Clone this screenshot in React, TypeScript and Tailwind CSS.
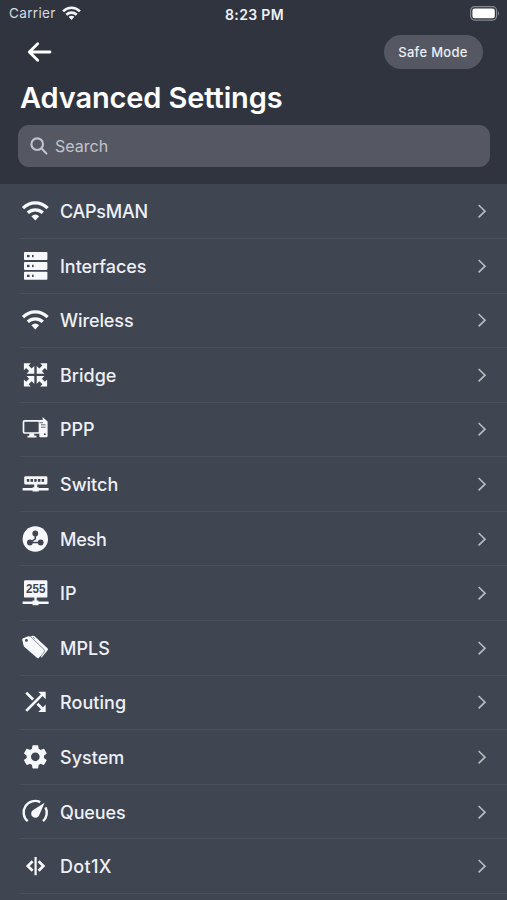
import type { ReactNode } from "react";

const BG = "#3f4551";

const WifiIcon = () => (
  <g fill="none" stroke="currentColor" strokeWidth="3.3">
    <path d="M2 11.2C9 4.2 19.6 4.2 26.6 11.2" />
    <path d="M6.8 15.8C11 11.8 17.6 11.8 21.8 15.8" />
    <path d="M10.4 19.2Q14.3 16 18.2 19.2L14.3 23.4Z" fill="currentColor" stroke="none" />
  </g>
);

const ServersIcon = () => (
  <g>
    {[0, 9.9, 19.8].map((y) => (
      <g key={y}>
        <rect x="3" y={y} width="23.4" height="8" rx="0.8" fill="currentColor" />
        <rect x="6" y={y + 2.9} width="2.6" height="2.3" fill={BG} />
        <rect x="11" y={y + 2.9} width="1.6" height="2.3" fill={BG} />
      </g>
    ))}
  </g>
);

const BridgeIcon = () => (
  <g fill="currentColor">
    {[0, 90, 180, 270].map((a) => (
      <path
        key={a}
        transform={`rotate(${a} 14.5 13.9)`}
        d="M2.9 2.3H9.8L7.6 4.5L10.6 7.5L13.3 5V12.7H5.6L8.1 10L5.1 7L2.9 9.2Z"
      />
    ))}
  </g>
);

const PppIcon = () => (
  <g>
    <rect x="2.5" y="5.8" width="16" height="12.2" rx="1.2" fill="none" stroke="currentColor" strokeWidth="1.7" />
    <path d="M8.5 18.2h4.5l.5 2.6h2v1.6H6.5v-1.6H8.2Z" fill="currentColor" />
    <path d="M18.3 5H21.6V2L26.6 6.6V21a1.2 1.2 0 0 1-1.2 1.2H19.5a1.2 1.2 0 0 1-1.2-1.2Z" fill="currentColor" />
    <path d="M20 9.8h4.6M20 12.2h4.6M18.4 7.7h3.6" stroke={BG} strokeWidth="0.8" />
    <circle cx="23.8" cy="19.3" r="1" fill={BG} />
  </g>
);

const SwitchIcon = () => (
  <g>
    <path
      d="M4.6 6.2H25q1.4 0 1.4 1.4v5.6q0 1.4-1.4 1.4H16.2v2.6H17.7V18H27.6V20.6H17.7V21.6H11.6V20.6H1.6V18H11.6V17.2H13.2V14.6H4.6q-1.4 0-1.4-1.4V7.6q0-1.4 1.4-1.4Z"
      fill="currentColor"
    />
    {[5.8, 9.5, 13.2, 16.9, 20.6].map((x) => (
      <path key={x} d={`M${x} 9h2.5v2.8h-2.5Z`} fill={BG} />
    ))}
  </g>
);

const MeshIcon = () => (
  <g>
    <circle cx="14.3" cy="14" r="12.7" fill="currentColor" />
    <path d="M14.3 9V13.8L9 17.5M19.7 17.5H9" fill="none" stroke={BG} strokeWidth="1.5" />
    <circle cx="14.3" cy="8.5" r="2.9" fill={BG} />
    <circle cx="8.9" cy="17.5" r="2.9" fill={BG} />
    <circle cx="19.7" cy="17.5" r="2.9" fill={BG} />
  </g>
);

const IpIcon = () => (
  <g>
    <path
      d="M4.2 1.2H25.2q1.2 0 1.2 1.2V17.4q0 1.2-1.2 1.2H15.7V21.4H17.5V22.4H27.6V25H17.5V26.3H11.6V25H1.6V22.4H11.6V21.4H13.4V18.6H4.2q-1.2 0-1.2-1.2V2.4q0-1.2 1.2-1.2Z"
      fill="currentColor"
    />
    <text
      x="5"
      y="14"
      textLength="19.4"
      lengthAdjust="spacingAndGlyphs"
      className="font-['Liberation_Sans',sans-serif] text-[12.5px] font-bold"
      fill={BG}
    >
      255
    </text>
  </g>
);

const MplsIcon = () => (
  <g>
    <path d="M8 3.3 11.5 1.8Q13 1.6 14.2 2.7L26.5 14.2Q27.5 15.2 26.6 16.3L20.5 23.8Z" fill="currentColor" />
    <path
      d="M2.2 4.2 7.2 2.3Q8.7 2.2 9.8 3.4L22.6 15.6Q23.6 16.8 22.8 17.8L18.1 23.8Q17.1 24.8 15.9 23.8L3.5 13Q2.7 12.2 2.5 11.3L1.2 5.7Q1.2 4.6 2.2 4.2Z"
      fill="currentColor"
    />
    <path d="M9.8 3 23 15.4Q24.1 16.6 23.2 17.9L18.8 24" fill="none" stroke={BG} strokeWidth="0.6" />
    <circle cx="5.4" cy="6.4" r="1.4" fill={BG} />
    <path d="m12.2 3.2 1.4 1.4" stroke={BG} strokeWidth="0.9" />
  </g>
);

const RoutingIcon = () => (
  <g fill="none" stroke="currentColor" strokeWidth="2.7">
    <path d="M5.2 22.9 22.5 5.4M5.2 4.6 12.1 11.5M16.4 15.8 22.5 21.9" />
    <path d="M17.3 3.8H24.7V11.2Z M24.7 16.5V23.9H17.3Z" fill="currentColor" stroke="none" />
  </g>
);

const GearIcon = () => (
  <path
    transform="translate(-.2 -.7) scale(1.21)"
    fill="currentColor"
    d="M19.14 12.94c.04-.3.06-.61.06-.94 0-.32-.02-.64-.07-.94l2.03-1.58a.49.49 0 0 0 .12-.61l-1.92-3.32a.488.488 0 0 0-.59-.22l-2.39.96c-.5-.38-1.03-.7-1.62-.94l-.36-2.54a.484.484 0 0 0-.48-.41h-3.84c-.24 0-.43.17-.47.41l-.36 2.54c-.59.24-1.13.57-1.62.94l-2.39-.96c-.22-.08-.47 0-.59.22L2.74 8.87c-.12.21-.08.47.12.61l2.03 1.58c-.05.3-.09.63-.09.94s.02.64.07.94l-2.03 1.58a.49.49 0 0 0-.12.61l1.92 3.32c.12.22.37.29.59.22l2.39-.96c.5.38 1.03.7 1.62.94l.36 2.54c.05.24.24.41.48.41h3.84c.24 0 .44-.17.47-.41l.36-2.54c.59-.24 1.13-.56 1.62-.94l2.39.96c.22.08.47 0 .59-.22l1.92-3.32c.12-.22.07-.47-.12-.61l-2.01-1.58zM12 15.6c-1.98 0-3.6-1.62-3.6-3.6s1.62-3.6 3.6-3.6 3.6 1.62 3.6 3.6-1.62 3.6-3.6 3.6z"
  />
);

const QueuesIcon = () => (
  <g>
    <path
      d="M6.7 23.2A11.5 11.5 0 0 1 19.2 4.1M24.5 9.4A11.5 11.5 0 0 1 22 23.2"
      fill="none"
      stroke="currentColor"
      strokeWidth="2.4"
    />
    <path d="M23.6 4.8 18.4 16.8A4.2 4.2 0 1 1 11.8 12.3Z" fill="currentColor" />
  </g>
);

const Dot1xIcon = () => (
  <g fill="none" stroke="currentColor" strokeWidth="2.7">
    <path d="M11.6 9.2 6.8 14 11.6 18.8M17.6 9.2 22.4 14 17.6 18.8" />
    <path d="M14.6 5V23.2" strokeWidth="2.2" />
  </g>
);

const rows: { label: string; icon: ReactNode; spacing: string }[] = [
  { label: "CAPsMAN", icon: <WifiIcon />, spacing: "tracking-[-0.25px]" },
  { label: "Interfaces", icon: <ServersIcon />, spacing: "tracking-[-0.05px]" },
  { label: "Wireless", icon: <WifiIcon />, spacing: "tracking-[-0.1px]" },
  { label: "Bridge", icon: <BridgeIcon />, spacing: "tracking-[0px]" },
  { label: "PPP", icon: <PppIcon />, spacing: "tracking-[0px]" },
  { label: "Switch", icon: <SwitchIcon />, spacing: "tracking-[0px]" },
  { label: "Mesh", icon: <MeshIcon />, spacing: "tracking-[-0.2px]" },
  { label: "IP", icon: <IpIcon />, spacing: "tracking-[0px]" },
  { label: "MPLS", icon: <MplsIcon />, spacing: "tracking-[0px]" },
  { label: "Routing", icon: <RoutingIcon />, spacing: "tracking-[0.05px]" },
  { label: "System", icon: <GearIcon />, spacing: "tracking-[0px]" },
  { label: "Queues", icon: <QueuesIcon />, spacing: "tracking-[-0.15px]" },
  { label: "Dot1X", icon: <Dot1xIcon />, spacing: "tracking-[0.3px]" },
];

function StatusBar() {
  return (
    <div className="grid h-[27px] grid-cols-3 items-center pr-[7px] pl-[9px]">
      <div className="flex items-center gap-[6px] text-[13.5px] text-[#d8dae0]">
        <span className="tracking-[0.35px]">Carrier</span>
        <svg width="19" height="15" viewBox="0 0 19 15" fill="none" stroke="#f4f5f8" strokeWidth="2.6">
          <path d="M1.1 5.4C6 .6 13 .6 17.9 5.4M4.3 8.7C7.3 5.9 11.7 5.9 14.7 8.7" />
          <path d="M6.6 10.8Q9.5 8.5 12.4 10.8L9.5 13.9Z" fill="#f4f5f8" stroke="none" />
        </svg>
      </div>
      <div className="pt-px text-center text-[14px] font-semibold tracking-[0.35px] whitespace-nowrap text-[#f0f1f5]">8:23 PM</div>
      <svg className="justify-self-end" width="31" height="15" viewBox="0 0 31 15">
        <rect x="1.6" y="0.7" width="26" height="13.4" rx="4" fill="none" stroke="#868992" strokeWidth="1.2" />
        <rect x="3.4" y="2.6" width="22.4" height="9.6" rx="2.2" fill="#fff" />
        <path d="M29 5.2q2 2.2 0 4.4Z" fill="#868992" />
      </svg>
    </div>
  );
}

export default function App() {
  return (
    <div className="flex h-[900px] w-[507px] flex-col overflow-hidden bg-[#3f4551] font-['Inter','Liberation_Sans',sans-serif]">
      <header className="flex h-[184px] shrink-0 flex-col bg-[#30343f]">
        <StatusBar />
        <div className="flex h-[50px] items-center justify-between pr-[24.5px] pl-[27px]">
          <svg
            width="26"
            height="22"
            viewBox="0 0 26 22"
            fill="none"
            stroke="#fff"
            strokeWidth="2.8"
            strokeLinecap="round"
            strokeLinejoin="round"
          >
            <path d="M23 11H2.5M10.7 2.8 2.3 11l8.4 8.2" />
          </svg>
          <button className="h-[34px] w-[99px] rounded-full bg-[#555863] pt-px text-[13px] font-medium tracking-[0.3px] whitespace-nowrap text-[#eceef3]">
            Safe Mode
          </button>
        </div>
        <h1 className="h-12 pl-[20px] text-[29px] leading-[41px] font-semibold tracking-[-0.12px] text-white">Advanced Settings</h1>
        <div className="mr-[17px] ml-[18px] flex h-[42px] items-center rounded-[11px] bg-[#555863] pl-[12px] text-[#c2c4cb]">
          <svg width="18" height="18" viewBox="0 0 18 18" fill="none" stroke="currentColor" strokeWidth="2.1" strokeLinecap="round">
            <circle cx="7.2" cy="7.2" r="5.8" />
            <path d="m11.6 11.6 4.8 4.8" />
          </svg>
          <span className="ml-[7px] text-[16px]">Search</span>
        </div>
      </header>
      <main className="flex flex-col pt-[0.4px]">
        {rows.map((row) => (
          <div
            key={row.label}
            className="ml-[20px] flex h-[54.58px] shrink-0 items-center border-b border-[#4a505c] pr-[19px] pl-px"
          >
            <svg width="28" height="28" viewBox="0 0 28 28" className="shrink-0 overflow-visible text-[#f7f8fb]">
              {row.icon}
            </svg>
            <span className={`ml-[11px] flex-1 pt-px text-[18px] font-medium text-[#eef0f6] ${row.spacing}`}>{row.label}</span>
            <svg width="12" height="16" viewBox="0 0 12 16" fill="none" stroke="#b6b9c0" strokeWidth="1.7">
              <path d="M2.6 2 9 8.2 2.6 14.4" />
            </svg>
          </div>
        ))}
      </main>
    </div>
  );
}
